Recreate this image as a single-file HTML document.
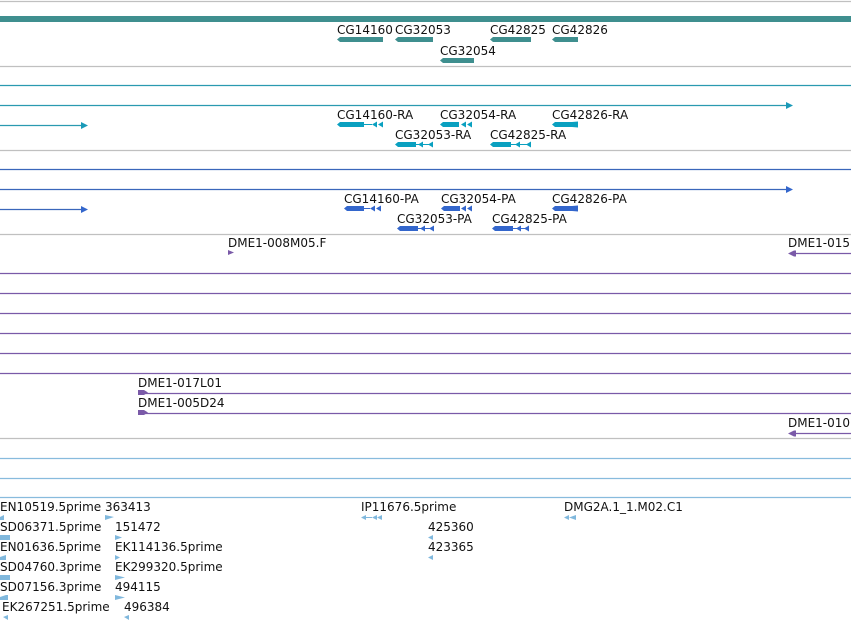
<!DOCTYPE html>
<html><head><meta charset="utf-8"><style>
html,body{margin:0;padding:0;background:#fff;width:851px;height:622px;overflow:hidden}
svg{display:block}
text{font-family:"DejaVu Sans","Liberation Sans",sans-serif;font-size:12px;fill:#111}
</style></head><body>
<svg width="851" height="622" viewBox="0 0 851 622" xmlns="http://www.w3.org/2000/svg">
<!-- separator lines -->
<g stroke-width="1.2">
<line x1="0" y1="1.5" x2="851" y2="1.5" stroke="#c0c0c0"/>
<line x1="0" y1="66.5" x2="851" y2="66.5" stroke="#c0c0c0"/>
<line x1="0" y1="85.5" x2="851" y2="85.5" stroke="#2a9ab0"/>
<line x1="0" y1="105.5" x2="790" y2="105.5" stroke="#2a9ab0"/>
<line x1="0" y1="125.5" x2="84" y2="125.5" stroke="#2a9ab0"/>
<line x1="0" y1="150.5" x2="851" y2="150.5" stroke="#c0c0c0"/>
<line x1="0" y1="169.5" x2="851" y2="169.5" stroke="#3a66bb"/>
<line x1="0" y1="189.5" x2="790" y2="189.5" stroke="#3a66bb"/>
<line x1="0" y1="209.5" x2="84" y2="209.5" stroke="#3a66bb"/>
<line x1="0" y1="234.5" x2="851" y2="234.5" stroke="#c0c0c0"/>
<line x1="794" y1="253.5" x2="851" y2="253.5" stroke="#7a5aa8"/>
<line x1="0" y1="273.5" x2="851" y2="273.5" stroke="#7a5aa8"/>
<line x1="0" y1="293.5" x2="851" y2="293.5" stroke="#7a5aa8"/>
<line x1="0" y1="313.5" x2="851" y2="313.5" stroke="#7a5aa8"/>
<line x1="0" y1="333.5" x2="851" y2="333.5" stroke="#7a5aa8"/>
<line x1="0" y1="353.5" x2="851" y2="353.5" stroke="#7a5aa8"/>
<line x1="0" y1="373.5" x2="851" y2="373.5" stroke="#7a5aa8"/>
<line x1="144" y1="393.5" x2="851" y2="393.5" stroke="#7a5aa8"/>
<line x1="144" y1="413.5" x2="851" y2="413.5" stroke="#7a5aa8"/>
<line x1="794" y1="433.5" x2="851" y2="433.5" stroke="#7a5aa8"/>
<line x1="0" y1="438.5" x2="851" y2="438.5" stroke="#c0c0c0"/>
<line x1="0" y1="458.5" x2="851" y2="458.5" stroke="#88bbdd"/>
<line x1="0" y1="478.5" x2="851" y2="478.5" stroke="#88bbdd"/>
<line x1="0" y1="497.5" x2="851" y2="497.5" stroke="#88bbdd"/>
</g>
<rect x="0" y="16" width="851" height="6" fill="#3f8f8f"/>
<!-- arrowheads on long lines -->
<polygon points="786,102 793,105.5 786,109" fill="#1a9ab8"/>
<polygon points="81,122 88,125.5 81,129" fill="#1a9ab8"/>
<polygon points="786,186 793,189.5 786,193" fill="#3366cc"/>
<polygon points="81,206 88,209.5 81,213" fill="#3366cc"/>
<!-- genes -->
<g fill="#3f8f8f">
<polygon points="337,39.5 340,37 383,37 383,42 340,42"/>
<polygon points="395,39.5 398,37 433,37 433,42 398,42"/>
<polygon points="490,39.5 493,37 531,37 531,42 493,42"/>
<polygon points="552,39.5 555,37 578,37 578,42 555,42"/>
<polygon points="440,60.5 443,58 474,58 474,63 443,63"/>
</g>
<g font-size="12">
<text x="337" y="34">CG14160</text><text x="395" y="34">CG32053</text>
<text x="490" y="34">CG42825</text><text x="552" y="34">CG42826</text>
<text x="440" y="55">CG32054</text>
<text x="337" y="119">CG14160-RA</text><text x="440" y="119">CG32054-RA</text><text x="552" y="119">CG42826-RA</text>
<text x="395" y="139">CG32053-RA</text><text x="490" y="139">CG42825-RA</text>
<text x="344" y="203">CG14160-PA</text><text x="441" y="203">CG32054-PA</text><text x="552" y="203">CG42826-PA</text>
<text x="397" y="223">CG32053-PA</text><text x="492" y="223">CG42825-PA</text>
<text x="228" y="247">DME1-008M05.F</text><text x="788" y="247">DME1-015</text>
<text x="138" y="387">DME1-017L01</text><text x="138" y="407">DME1-005D24</text>
<text x="788" y="427">DME1-010</text>
<text x="0" y="511">EN10519.5prime</text><text x="105" y="511">363413</text>
<text x="0" y="531">SD06371.5prime</text><text x="115" y="531">151472</text>
<text x="0" y="551">EN01636.5prime</text><text x="115" y="551">EK114136.5prime</text>
<text x="0" y="571">SD04760.3prime</text><text x="115" y="571">EK299320.5prime</text>
<text x="0" y="591">SD07156.3prime</text><text x="115" y="591">494115</text>
<text x="2" y="611">EK267251.5prime</text><text x="124" y="611">496384</text>
<text x="361" y="511">IP11676.5prime</text><text x="428" y="531">425360</text><text x="428" y="551">423365</text>
<text x="564" y="511">DMG2A.1_1.M02.C1</text>
</g>
<!-- RA transcripts -->
<g fill="#0aa0c0" stroke="#0aa0c0">
<g stroke="none">
<polygon points="337,124.5 340,122 364,122 364,127 340,127"/>
<polygon points="372,124.5 377,121.5 377,127.5"/><polygon points="378,124.5 383,121.5 383,127.5"/>
<polygon points="440,124.5 443,122 459,122 459,127 443,127"/>
<polygon points="461,124.5 466,121.5 466,127.5"/><polygon points="467,124.5 472,121.5 472,127.5"/>
<polygon points="552,124.5 555,122 572,122 578,121.5 578,127.5 572,127 555,127"/>
<polygon points="395,144.5 398,142 416,142 416,147 398,147"/>
<polygon points="418,144.5 423,141.5 423,147.5"/><polygon points="428,144.5 433,141.5 433,147.5"/>
<polygon points="490,144.5 493,142 511,142 511,147 493,147"/>
<polygon points="515,144.5 520,141.5 520,147.5"/><polygon points="526,144.5 531,141.5 531,147.5"/>
</g>
<line x1="364" y1="124.5" x2="372" y2="124.5"/><line x1="416" y1="144.5" x2="433" y2="144.5"/><line x1="511" y1="144.5" x2="531" y2="144.5"/>
</g>
<!-- PA -->
<g fill="#3366cc" stroke="#3366cc">
<g stroke="none">
<polygon points="344,208.5 347,206 364,206 364,211 347,211"/>
<polygon points="370,208.5 375,205.5 375,211.5"/><polygon points="376,208.5 381,205.5 381,211.5"/>
<polygon points="441,208.5 444,206 460,206 460,211 444,211"/>
<polygon points="461,208.5 466,205.5 466,211.5"/><polygon points="467,208.5 472,205.5 472,211.5"/>
<polygon points="552,208.5 555,206 572,206 578,205.5 578,211.5 572,211 555,211"/>
<polygon points="397,228.5 400,226 418,226 418,231 400,231"/>
<polygon points="420,228.5 425,225.5 425,231.5"/><polygon points="429,228.5 434,225.5 434,231.5"/>
<polygon points="492,228.5 495,226 513,226 513,231 495,231"/>
<polygon points="516,228.5 521,225.5 521,231.5"/><polygon points="524,228.5 529,225.5 529,231.5"/>
</g>
<line x1="364" y1="208.5" x2="370" y2="208.5"/><line x1="418" y1="228.5" x2="434" y2="228.5"/><line x1="513" y1="228.5" x2="529" y2="228.5"/>
</g>
<!-- purple -->
<g fill="#7a5aa8">
<polygon points="228,250 234,252.5 228,255"/>
<polygon points="788,253.5 794,250.5 796,250.5 796,256.5 794,256.5"/>
<polygon points="138,390 144,390 148,392.5 144,395 138,395"/>
<polygon points="138,410 144,410 148,412.5 144,415 138,415"/>
<polygon points="788,433.5 794,430.5 796,430.5 796,436.5 794,436.5"/>
</g>
<!-- bottom small glyphs -->
<g fill="#80b8dd">
<polygon points="0,517 4,515 4,520 0,520"/>
<polygon points="105,515 114,517 105,520"/>
<polygon points="0,535 10,535 10,540 0,540"/>
<polygon points="115,535 122,537.5 115,540"/>
<polygon points="0,557 6,555 6,560 0,560"/>
<polygon points="115,555 120,557.5 115,560"/>
<polygon points="0,575 10,575 10,580 0,580"/>
<polygon points="115,575 125,577.5 115,580"/>
<polygon points="0,597 6,595 8,595 8,600 0,600"/>
<polygon points="115,595 125,597.5 115,600"/>
<polygon points="3,617 8,615 8,620"/>
<polygon points="124,617 129,615 129,620"/>
<polygon points="361,517.5 366,515 366,520"/><rect x="366" y="517" width="6" height="1"/>
<polygon points="372,517.5 377,515 377,520"/><polygon points="377,517.5 382,515 382,520"/>
<polygon points="428,537.5 433,535 433,540"/>
<polygon points="428,557.5 433,555 433,560"/>
<polygon points="564,517.5 569,515 569,520"/><polygon points="569,517.5 576,515 576,520"/>
</g>
</svg>
</body></html>
